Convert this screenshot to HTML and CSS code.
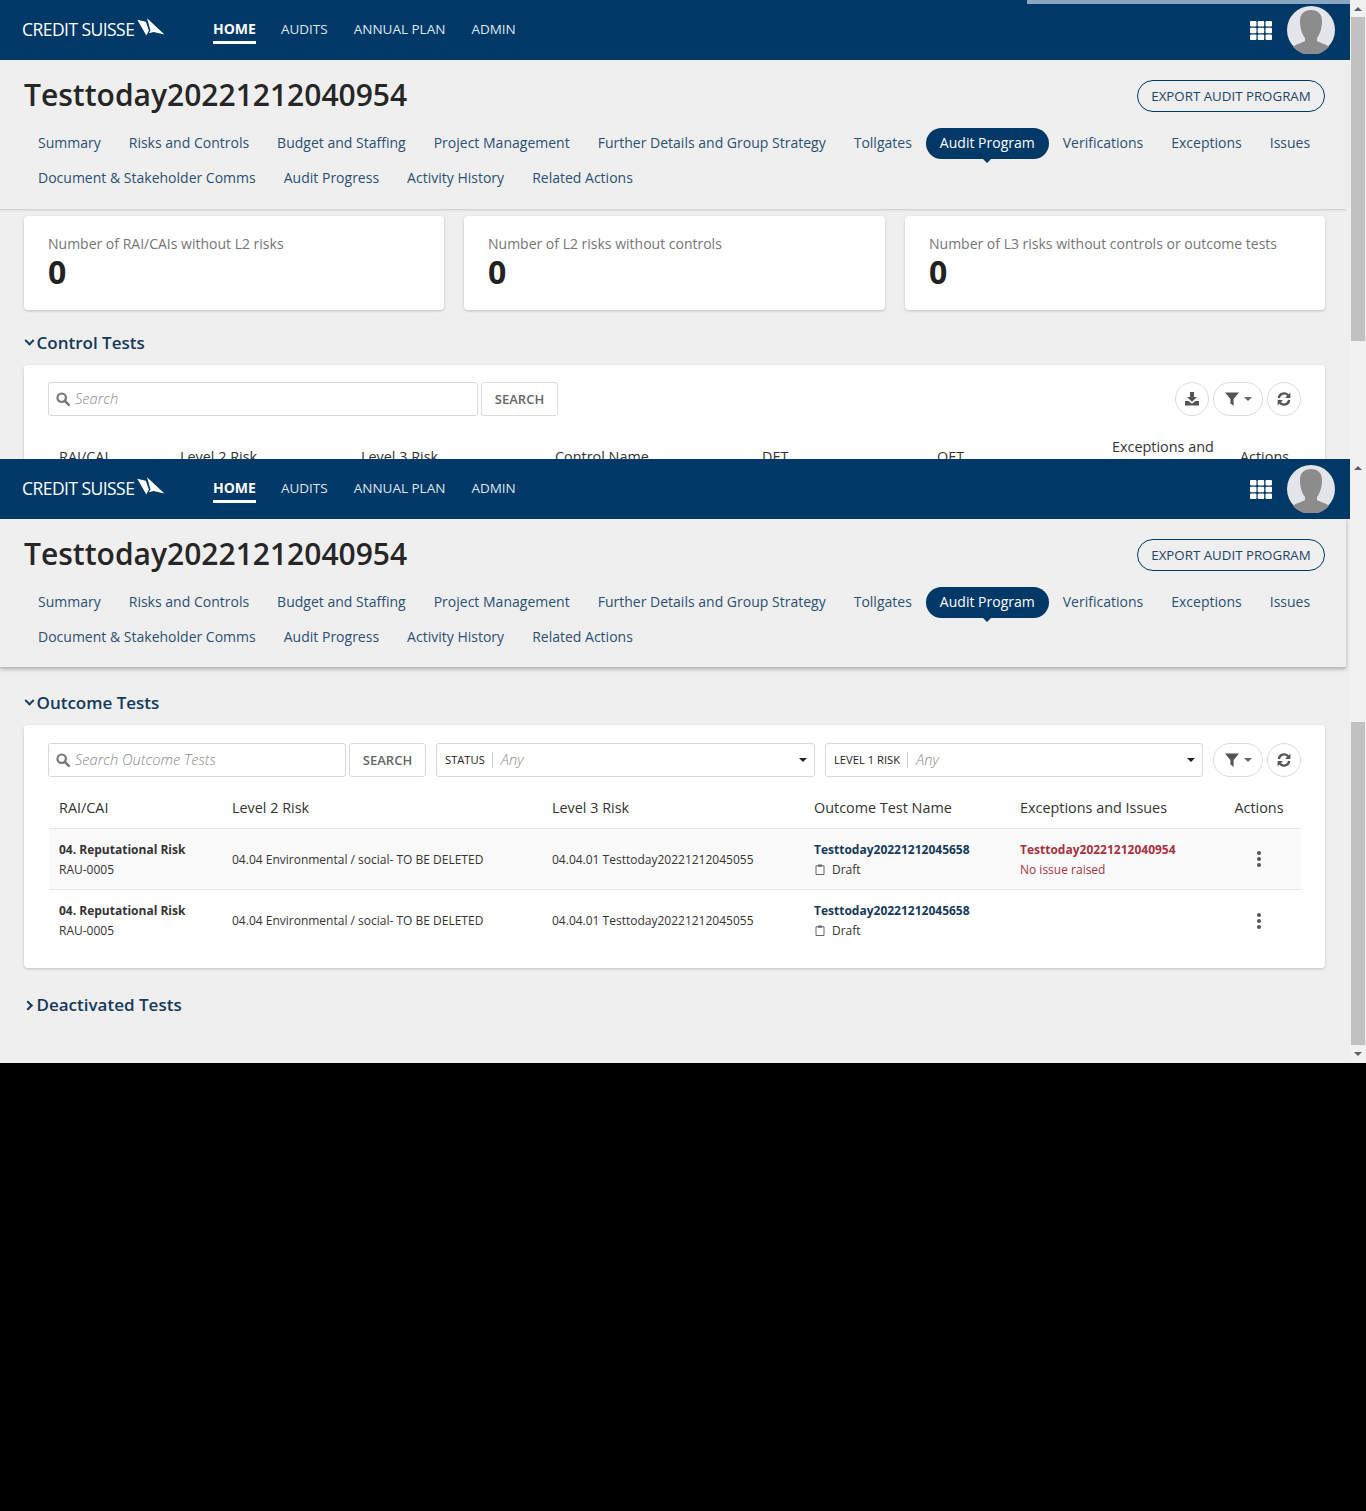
FILE: index.html
```html
<!DOCTYPE html>
<html lang="en">
<head>
  <meta charset="UTF-8">
  <title>Audit Program</title>
  <link rel="stylesheet" href="styles.css">
</head>
<body>
  <svg class="defs" width="0" height="0">
    <symbol id="i-search" viewBox="0 0 14 14"><circle cx="5.7" cy="5.7" r="4.2" fill="none" stroke="currentColor" stroke-width="2.200"/><path d="M8.8 8.8l4 4" stroke="currentColor" stroke-width="2.600" stroke-linecap="round"/></symbol>
    <symbol id="i-filter" viewBox="0 0 14 14"><path d="M0 .5h14L8.6 7v6.8L5.4 11.4V7z" fill="currentColor"/></symbol>
    <symbol id="i-download" viewBox="0 0 14 14"><path d="M5 0h4v5h3L7 9.800 2 5h3z" fill="currentColor"/><path d="M0 9h3.600L7 11.800 10.400 9H14v4.500H0z" fill="currentColor"/></symbol>
    <symbol id="i-refresh" viewBox="0 0 14 14"><path d="M1.800 6A5.300 5.300 0 0 1 11 3.200" fill="none" stroke="currentColor" stroke-width="2.400"/><path d="M13.400.6v5.400H8z" fill="currentColor"/><path d="M12.200 8A5.300 5.300 0 0 1 3 10.800" fill="none" stroke="currentColor" stroke-width="2.400"/><path d="M.6 13.400V8H6z" fill="currentColor"/></symbol>
    <symbol id="i-draft" viewBox="0 0 10 11"><path d="M1 1.800h8v8.700H1z" fill="none" stroke="currentColor"/><path d="M3 .5h4v2.200H3z" fill="currentColor"/></symbol>
    <symbol id="i-sail" viewBox="0 0 28 20"><path d="M.3 2.500L8.500 4.500 11.500 13 9 17.800z" fill="#fff"/><path d="M9.700 1L26.500 16.800 16 14.300 11.500 15.500 13 12.800z" fill="#fff"/></symbol>
    <symbol id="i-apps" viewBox="0 0 22 19"><g fill="#fff"><rect width="6.500" height="5.500" rx="1"/><rect x="7.700" width="6.500" height="5.500" rx="1"/><rect x="15.500" width="6.500" height="5.500" rx="1"/><rect y="6.700" width="6.500" height="5.500" rx="1"/><rect x="7.700" y="6.700" width="6.500" height="5.500" rx="1"/><rect x="15.500" y="6.700" width="6.500" height="5.500" rx="1"/><rect y="13.400" width="6.500" height="5.500" rx="1"/><rect x="7.700" y="13.400" width="6.500" height="5.500" rx="1"/><rect x="15.500" y="13.400" width="6.500" height="5.500" rx="1"/></g></symbol>
    <symbol id="i-avatar" viewBox="0 0 48 48"><circle cx="24" cy="24" r="24" fill="#e3e5e8"/><path d="M24 4c7 0 11 4 11 11 0 7-2 13-5 17v3c3 2 9 3 12 6a24 24 0 0 1-36 0c3-3 9-4 12-6v-3c-3-4-5-10-5-17 0-7 4-11 11-11z" fill="#8c8c8c"/></symbol>
  </svg>

  <section class="screen screen-top">
    <div class="page">
      <header class="topbar">
        <div class="loadbar"></div>
        <div class="logo"><span class="logo-text">CREDIT SUISSE</span><svg class="logo-sail"><use href="#i-sail"/></svg></div>
        <nav class="mainnav">
          <a class="active">HOME</a><a>AUDITS</a><a>ANNUAL PLAN</a><a>ADMIN</a>
        </nav>
        <svg class="apps"><use href="#i-apps"/></svg>
        <svg class="avatar"><use href="#i-avatar"/></svg>
      </header>
      <div class="subhead">
        <div class="title-row">
          <h1>Testtoday20221212040954</h1>
          <button class="btn-export">EXPORT AUDIT PROGRAM</button>
        </div>
        <nav class="tabs">
          <a>Summary</a><a>Risks and Controls</a><a>Budget and Staffing</a><a>Project Management</a><a>Further Details and Group Strategy</a><a>Tollgates</a><a class="active">Audit Program</a><a>Verifications</a><a>Exceptions</a><a>Issues</a>
          <a>Document &amp; Stakeholder Comms</a><a>Audit Progress</a><a>Activity History</a><a>Related Actions</a>
        </nav>
      </div>
      <div class="content content-top">
        <div class="stats">
          <div class="stat"><div class="stat-label">Number of RAI/CAIs without L2 risks</div><div class="stat-value">0</div></div>
          <div class="stat"><div class="stat-label">Number of L2 risks without controls</div><div class="stat-value">0</div></div>
          <div class="stat"><div class="stat-label">Number of L3 risks without controls or outcome tests</div><div class="stat-value">0</div></div>
        </div>
        <h2 class="section-title"><span class="chev chev-down"></span>Control Tests</h2>
        <div class="card card-control">
          <div class="toolbar">
            <label class="search search-wide"><svg class="search-icon"><use href="#i-search"/></svg><span class="placeholder">Search</span></label>
            <button class="btn-search">SEARCH</button>
            <div class="toolbar-right">
              <button class="btn-round"><svg class="ico"><use href="#i-download"/></svg></button>
              <button class="btn-round btn-pill"><svg class="ico"><use href="#i-filter"/></svg><span class="caret"></span></button>
              <button class="btn-round"><svg class="ico"><use href="#i-refresh"/></svg></button>
            </div>
          </div>
          <div class="control-head">
            <span class="ch ch1">RAI/CAI</span><span class="ch ch2">Level 2 Risk</span><span class="ch ch3">Level 3 Risk</span><span class="ch ch4">Control Name</span><span class="ch ch5">DET</span><span class="ch ch6">OET</span><span class="ch ch7">Exceptions and Issues</span><span class="ch ch8">Actions</span>
          </div>
        </div>
      </div>
    </div>
    <div class="scrollbar">
      <span class="arrow-up"></span>
      <div class="thumb thumb-top"></div>
    </div>
  </section>

  <section class="screen screen-bottom">
    <div class="page">
      <header class="topbar">
        <div class="logo"><span class="logo-text">CREDIT SUISSE</span><svg class="logo-sail"><use href="#i-sail"/></svg></div>
        <nav class="mainnav">
          <a class="active">HOME</a><a>AUDITS</a><a>ANNUAL PLAN</a><a>ADMIN</a>
        </nav>
        <svg class="apps"><use href="#i-apps"/></svg>
        <svg class="avatar"><use href="#i-avatar"/></svg>
      </header>
      <div class="subhead subhead-stuck">
        <div class="title-row">
          <h1>Testtoday20221212040954</h1>
          <button class="btn-export">EXPORT AUDIT PROGRAM</button>
        </div>
        <nav class="tabs">
          <a>Summary</a><a>Risks and Controls</a><a>Budget and Staffing</a><a>Project Management</a><a>Further Details and Group Strategy</a><a>Tollgates</a><a class="active">Audit Program</a><a>Verifications</a><a>Exceptions</a><a>Issues</a>
          <a>Document &amp; Stakeholder Comms</a><a>Audit Progress</a><a>Activity History</a><a>Related Actions</a>
        </nav>
      </div>
      <div class="content content-bottom">
        <h2 class="section-title section-outcome"><span class="chev chev-down"></span>Outcome Tests</h2>
        <div class="card card-outcome">
          <div class="toolbar">
            <label class="search search-outcome"><svg class="search-icon"><use href="#i-search"/></svg><span class="placeholder">Search Outcome Tests</span></label>
            <button class="btn-search">SEARCH</button>
            <div class="select select-status"><span class="select-label">STATUS</span><span class="select-value">Any</span><span class="caret caret-dark"></span></div>
            <div class="select select-risk"><span class="select-label">LEVEL 1 RISK</span><span class="select-value">Any</span><span class="caret caret-dark"></span></div>
            <button class="btn-round btn-pill"><svg class="ico"><use href="#i-filter"/></svg><span class="caret"></span></button>
            <button class="btn-round"><svg class="ico"><use href="#i-refresh"/></svg></button>
          </div>
          <table class="grid">
            <thead>
              <tr><th class="c1">RAI/CAI</th><th class="c2">Level 2 Risk</th><th class="c3">Level 3 Risk</th><th class="c4">Outcome Test Name</th><th class="c5">Exceptions and Issues</th><th class="c6">Actions</th></tr>
            </thead>
            <tbody>
              <tr class="row-alt">
                <td><b>04. Reputational Risk</b><div class="sub">RAU-0005</div></td>
                <td>04.04 Environmental / social- TO BE DELETED</td>
                <td>04.04.01 Testtoday20221212045055</td>
                <td><a class="link">Testtoday20221212045658</a><div class="sub"><svg class="draft"><use href="#i-draft"/></svg>Draft</div></td>
                <td class="issue"><a class="link-red">Testtoday20221212040954</a><div class="sub">No issue raised</div></td>
                <td class="actions"><span class="dots"><i></i><i></i><i></i></span></td>
              </tr>
              <tr>
                <td><b>04. Reputational Risk</b><div class="sub">RAU-0005</div></td>
                <td>04.04 Environmental / social- TO BE DELETED</td>
                <td>04.04.01 Testtoday20221212045055</td>
                <td><a class="link">Testtoday20221212045658</a><div class="sub"><svg class="draft"><use href="#i-draft"/></svg>Draft</div></td>
                <td></td>
                <td class="actions"><span class="dots"><i></i><i></i><i></i></span></td>
              </tr>
            </tbody>
          </table>
        </div>
        <h2 class="section-title section-deact"><span class="chev chev-right"></span>Deactivated Tests</h2>
      </div>
    </div>
    <div class="scrollbar">
      <span class="arrow-up"></span>
      <div class="thumb thumb-bottom"></div>
      <span class="arrow-down"></span>
    </div>
  </section>
</body>
</html>
```

FILE: styles.css
```css
* { box-sizing: border-box; }
html, body { margin: 0; padding: 0; background: #000; }
body { font-family: "Open Sans", Arial, sans-serif; color: #222; width: 1366px; height: 1511px; overflow: hidden; }
h1, h2 { margin: 0; }
button { font-family: inherit; cursor: pointer; }
.defs { position: absolute; }

.screen { display: flex; background: #efefef; overflow: hidden; }
.screen-top { height: 459px; }
.screen-bottom { height: 604px; }
.page { width: 1350px; flex: none; }

.scrollbar { width: 16px; background: #f1f1f1; display: flex; flex-direction: column; align-items: center; position: relative; }
.thumb { width: 14px; background: #c1c1c1; }
.thumb-top { height: 324px; margin-top: 6px; }
.thumb-bottom { height: 323px; margin-top: 252px; }
.arrow-up { width: 0; height: 0; margin-top: 7px; border: 4px solid transparent; border-top: 0; border-bottom: 4px solid #606060; }
.arrow-down { width: 0; height: 0; margin-top: 7px; border: 4px solid transparent; border-bottom: 0; border-top: 4px solid #606060; }

.topbar { height: 60px; background: #003868; display: flex; align-items: center; position: relative; padding: 0 15px 0 23px; }
.loadbar { position: absolute; top: 0; right: 0; width: 323px; height: 4px; background: #8aa5c0; }
.logo { width: 190px; display: flex; align-items: center; }
.logo-text { color: #fff; font-size: 17.500px; font-weight: 400; letter-spacing: -.55px; width: 115px; margin-left: -1px; padding-bottom: 2px; white-space: nowrap; }
.logo-sail { width: 29px; height: 21px; margin-top: -5px; }
.mainnav { display: flex; gap: 26px; }
.mainnav a { font-size: 13.500px; color: #dfe7ef; height: 28px; line-height: 27px; }
.mainnav a.active { font-size: 14px; line-height: 26px; color: #fff; font-weight: 700; border-bottom: 3px solid #fff; margin-right: -1px; }
.apps { width: 22px; height: 19px; margin-left: auto; }
.avatar { width: 48px; height: 48px; margin-left: 15px; }

.subhead { height: 150px; padding: 0 24px; border-bottom: 1px solid #d4d4d4; width: 1346px; box-shadow: 0 1px 1px rgba(0,0,0,.06); }
.subhead-stuck { height: 149px; border-bottom: 1px solid #bbb; box-shadow: 0 1px 4px rgba(0,0,0,.3); }
.title-row { display: flex; justify-content: space-between; align-items: center; height: 68px; width: 1301px; }
h1 { font-size: 30px; font-weight: 600; color: #262626; }
.btn-export { width: 188px; height: 32px; margin-top: 4px; border: 1px solid #003868; border-radius: 16px; background: transparent; color: #1e4468; font-size: 13.300px; font-weight: 400; padding: 0; }
.tabs { display: flex; flex-wrap: wrap; width: 1302px; }
.tabs a { font-size: 14px; letter-spacing: .006px; line-height: 29px; height: 31px; margin: 0 0 4px; padding: 0 14px; color: #2a5075; border-radius: 16px; white-space: nowrap; position: relative; }
.tabs a.active { background: #003868; color: #fff; font-weight: 500; }
.tabs a.active::after { content: ""; position: absolute; left: 50%; bottom: -4px; margin-left: -4px; border: 4px solid transparent; border-bottom: 0; border-top: 4px solid #003868; }

.content { padding: 0 25px 0 24px; }
.content-top { padding-top: 6px; }
.stats { display: grid; grid-template-columns: 420px 421px 420px; gap: 20px; }
.stat, .card { background: #fff; border-radius: 4px; box-shadow: 0 1px 3px rgba(0,0,0,.2); }
.stat { height: 94px; padding: 18px 24px 0; }
.stat-label { font-size: 14px; line-height: 20px; color: #757575; }
.stat-value { font-size: 32px; line-height: 36px; font-weight: 700; color: #222; }

.section-title { font-size: 17px; font-weight: 600; line-height: 24px; color: #14395c; display: flex; align-items: center; margin-top: 21px; }
.chev { width: 7px; height: 7px; border-right: 2px solid #14395c; border-bottom: 2px solid #14395c; margin-left: 2px; margin-right: 3.500px; flex: none; }
.chev-down { transform: rotate(45deg) translate(-2px, -2px); }
.chev-right { transform: translateX(-1.500px) rotate(-45deg); }
.section-outcome { margin-top: 0; }
.section-deact { margin-top: 25px; font-size: 17px; }
.content-bottom { padding-top: 23px; }

.card { padding: 17px 24px 0; margin-top: 10px; }
.card-control { height: 140px; }
.card-outcome { height: 243px; padding-top: 18px; }
.toolbar { display: flex; align-items: center; height: 34px; }
.search { height: 34px; border: 1px solid #d8d8d8; border-radius: 3px; display: flex; align-items: center; padding-left: 7px; background: #fff; }
.search-wide { width: 430px; }
.search-outcome { width: 298px; }
.search-icon { width: 14px; height: 14px; color: #777; margin-right: 5px; }
.placeholder { font-size: 14.700px; font-style: italic; font-weight: 300; color: #8a8a8a; padding-bottom: 2px; }
.btn-search { width: 77px; height: 34px; margin-left: 3px; border: 1px solid #dcdcdc; border-radius: 3px; background: #fff; color: #666; font-size: 13px; font-weight: 600; padding: 0; }
.toolbar-right { margin-left: auto; display: flex; gap: 4px; }
.btn-round { width: 34px; height: 34px; flex: none; border: 1px solid #dcdcdc; border-radius: 17px; background: #fff; color: #555; display: flex; align-items: center; justify-content: center; gap: 5px; padding: 0; }
.btn-pill { width: 50px; }
.ico { width: 14px; height: 14px; }
.caret { width: 0; height: 0; border: 4px solid transparent; border-bottom: 0; border-top: 4px solid #666; }
.caret-dark { border-top-color: #222; margin-left: auto; }

.select { height: 34px; border: 1px solid #d8d8d8; border-radius: 3px; display: flex; align-items: center; padding: 0 7px 0 8px; background: #fff; }
.select-status { width: 379px; margin-left: 10px; }
.select-risk { width: 378px; margin-left: 10px; margin-right: 10px; }
.select + .btn-round { margin-right: 4px; }
.select-label { font-size: 11.200px; color: #222; padding-right: 7px; border-right: 1px solid #ccc; line-height: 16px; }
.select-value { font-size: 14.700px; font-style: italic; font-weight: 300; color: #8a8a8a; margin-left: 8px; padding-bottom: 2px; }

.control-head { position: relative; height: 40px; margin: 14px -24px 0; }
.ch { position: absolute; top: 17px; font-size: 14.400px; font-weight: 500; line-height: 20px; color: #333; }
.ch1 { left: 35px; }
.ch2 { left: 156px; }
.ch3 { left: 337px; }
.ch4 { left: 531px; }
.ch5 { left: 738px; }
.ch6 { left: 913px; }
.ch7 { left: 1088px; top: 7px; width: 110px; text-align: left; }
.ch8 { left: 1216px; }

.grid { width: 1252px; margin: 10px 0 0 1px; border-collapse: collapse; table-layout: fixed; font-size: 12px; color: #333; }
.grid th { font-size: 14.400px; font-weight: 500; text-align: left; height: 41px; padding: 0 10px; color: #333; border-bottom: 1px solid #e6e6e6; }
.grid td { height: 61px; padding: 2px 10px 0; line-height: 20px; border-bottom: 1px solid #e8e8e8; white-space: nowrap; }
.grid tbody tr:last-child td { border-bottom: 0; }
.c1 { width: 173px; }
.c2 { width: 320px; }
.c3 { width: 262px; }
.c4 { width: 206px; }
.c5 { width: 213px; }
.grid .c6 { width: 78px; text-align: center; padding: 0 6px 0 0; }
.row-alt { background: #fafafa; }
.grid b { font-weight: 700; color: #333; }
.link { color: #14395c; font-weight: 700; }
.link-red { color: #a8323e; font-weight: 700; }
.issue .sub { color: #a8323e; }
.sub { display: flex; align-items: center; }
.draft { width: 10px; height: 11px; color: #666; margin: 0 7px 0 1px; }
.grid .actions { text-align: center; padding: 0 6px 0 0; }
.dots { display: inline-flex; flex-direction: column; gap: 2px; vertical-align: middle; }
.dots i { width: 4px; height: 4px; border-radius: 50%; background: #555; }
```
